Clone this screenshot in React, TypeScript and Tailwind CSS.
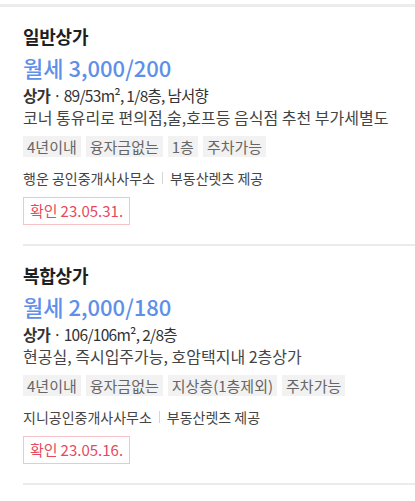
const listings = [
  {
    title: "일반상가",
    price: "월세 3,000/200",
    area: "89/53m², 1/8층, 남서향",
    desc: "코너 통유리로 편의점,술,호프등 음식점 추천 부가세별도",
    tags: ["4년이내", "융자금없는", "1층", "주차가능"],
    agent: "행운 공인중개사사무소",
    date: "23.05.31.",
  },
  {
    title: "복합상가",
    price: "월세 2,000/180",
    area: "106/106m², 2/8층",
    desc: "현공실, 즉시입주가능, 호암택지내 2층상가",
    tags: ["4년이내", "융자금없는", "지상층(1층제외)", "주차가능"],
    agent: "지니공인중개사사무소",
    date: "23.05.16.",
  },
];

export default function App() {
  return (
    <div className="min-h-screen bg-white pt-1 text-[#333]" style={{ fontFamily: '"Noto Sans CJK KR", "Noto Sans", sans-serif' }}>
      <div className="h-[3px] bg-[#ececec]" />
      {listings.map((item) => (
        <div key={item.title} className="ml-[23px] border-b-2 border-[#ebebeb] pt-[16px] pb-[19px]">
          <h2 className="text-[18px] leading-[26px] font-bold tracking-[-0.25px] text-[#1f1f1f]">{item.title}</h2>
          <p className="mt-[4px] text-[22px] leading-[28px] font-medium text-[#5e8fe9]">{item.price}</p>
          <p className="mt-[3px] text-[15.5px] leading-[22px] tracking-[-0.7px] text-[#333]">
            <span className="font-bold">상가</span> · {item.area}
          </p>
          <p className="text-[16px] leading-[22px] text-[#444]">{item.desc}</p>
          <div className="mt-[8px] flex gap-[5px]">
            {item.tags.map((t) => (
              <span key={t} className="bg-[#f2f2f2] px-[4px] text-[15px] leading-[21px] text-[#666]">
                {t}
              </span>
            ))}
          </div>
          <div className="mt-[11px] flex items-center text-[14px] leading-[20px] text-[#444]">
            <span>{item.agent}</span>
            <span className="mx-[7px] h-[12px] w-px bg-[#d6d6d6]" />
            <span>부동산렛츠 제공</span>
          </div>
          <div className="mt-[9px] inline-flex items-center border border-[#f5c3c8] px-[6px] py-[3px] text-[15px] leading-[20px] text-[#e8485c]">
            <span className="mr-[3px]">확인</span>
            <span>{item.date}</span>
          </div>
        </div>
      ))}
    </div>
  );
}
